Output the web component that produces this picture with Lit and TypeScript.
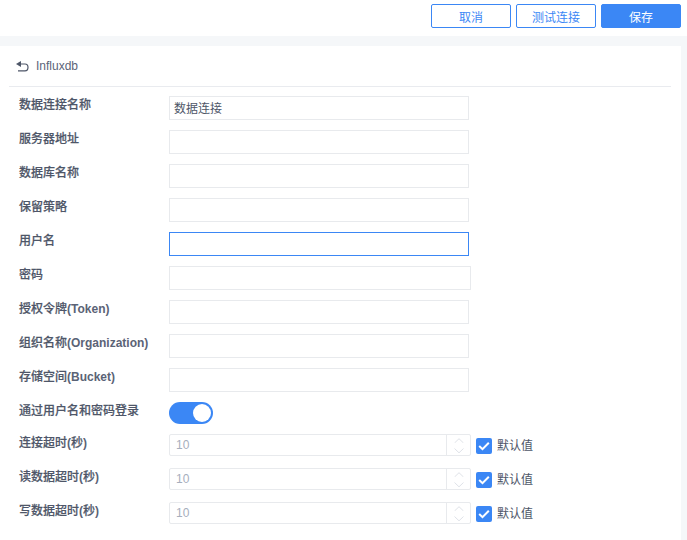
import { LitElement, html, css, svg } from "lit";
import { customElement } from "lit/decorators.js";

const textRows: { label: string; latin?: string; value?: string; focus?: boolean; wide?: boolean }[] = [
  { label: "数据连接名称", value: "数据连接" },
  { label: "服务器地址" },
  { label: "数据库名称" },
  { label: "保留策略" },
  { label: "用户名", focus: true },
  { label: "密码", wide: true },
  { label: "授权令牌", latin: "(Token)" },
  { label: "组织名称", latin: "(Organization)" },
  { label: "存储空间", latin: "(Bucket)" },
];
const numRows = ["连接超时", "读数据超时", "写数据超时"];

@customElement("app-root")
export class AppRoot extends LitElement {
  static styles = css`
    :host {
      display: block;
      width: 687px;
      height: 540px;
      overflow: hidden;
      background: #f5f7f9;
      font-family: "Liberation Sans", "Noto Sans CJK SC", sans-serif;
      font-size: 12px;
      color: #4e5668;
    }
    .top {
      height: 36px;
      box-sizing: border-box;
      background: #fff;
      padding: 4px 6px 0 0;
      display: flex;
      justify-content: flex-end;
      gap: 5px;
    }
    .btn {
      width: 80px;
      height: 24px;
      box-sizing: border-box;
      border: 1px solid #3b87f5;
      border-radius: 2px;
      background: #fff;
      color: #3b87f5;
      font: inherit;
      padding: 0;
      display: flex;
      align-items: center;
      justify-content: center;
    }
    .btn.primary {
      background: #3b87f5;
      color: #fff;
    }
    .card {
      margin: 10px 6px 0 0;
      height: 494px;
      background: #fff;
      padding: 0 10px 0 9px;
      box-sizing: border-box;
    }
    .head {
      height: 41px;
      box-sizing: border-box;
      border-bottom: 1px solid #e9ebef;
      display: flex;
      align-items: center;
      gap: 7px;
      padding: 0 0 0 7px;
      color: #5b6478;
    }
    .head svg {
      display: block;
    }
    .form {
      padding-top: 9px;
      display: flex;
      flex-direction: column;
      gap: 10px;
    }
    .row {
      display: flex;
      height: 24px;
      padding-left: 10px;
    }
    .label {
      width: 150px;
      flex: none;
      padding-top: 1px;
      line-height: 16px;
      font-weight: 500;
      -webkit-text-stroke: 0.2px #4e5668;
    }
    .latin {
      font-weight: 700;
      -webkit-text-stroke: 0;
      color: #5b6376;
    }
    .input {
      width: 300px;
      height: 24px;
      box-sizing: border-box;
      border: 1px solid #e8eaed;
      background: #fff;
      padding: 2px 4px 0;
      line-height: 20px;
      color: #4e5668;
    }
    .input.focus {
      border-color: #3b87f5;
    }
    .input.wide {
      width: 302px;
    }
    .switch {
      width: 44px;
      height: 22px;
      border-radius: 11px;
      background: #3b87f5;
      position: relative;
    }
    .knob {
      position: absolute;
      right: 2px;
      top: 2px;
      width: 18px;
      height: 18px;
      border-radius: 50%;
      background: #fff;
    }
    .num {
      width: 302px;
      height: 22px;
      box-sizing: border-box;
      border: 1px solid #e8eaed;
      border-radius: 2px;
      background: #fff;
      display: flex;
      flex: none;
    }
    .num .val {
      flex: 1;
      padding-left: 6px;
      line-height: 20px;
      color: #a6aebd;
    }
    .spin {
      width: 23px;
      border-left: 1px solid #e8eaed;
      display: flex;
      flex-direction: column;
      align-items: center;
      justify-content: center;
      gap: 5px;
    }
    .spin svg {
      display: block;
    }
    .check {
      margin-left: 5px;
      margin-top: 4px;
      width: 16px;
      height: 16px;
      border-radius: 2px;
      background: #3b87f5;
      flex: none;
    }
    .check svg {
      display: block;
    }
    .def {
      margin-left: 5px;
      margin-top: 4px;
      line-height: 16px;
    }
    .numrow {
      margin-top: -2px;
      margin-bottom: 2px;
    }
  `;

  private chevron(up: boolean) {
    const d = up ? "M0.5 5 L5 0.7 L9.5 5" : "M0.5 0.5 L5 4.8 L9.5 0.5";
    return html`<svg width="10" height="5" viewBox="0 0 10 5">${svg`<path d=${d} fill="none" stroke="#dfe2e8" stroke-width="1"/>`}</svg>`;
  }

  render() {
    return html`
      <div class="top">
        <button class="btn">取消</button>
        <button class="btn">测试连接</button>
        <button class="btn primary">保存</button>
      </div>
      <div class="card">
        <div class="head">
          <svg width="13" height="11" viewBox="0 0 13 11">
            <path d="M0 3 L5 0 V6 Z" fill="#4e5668"/>
            <path d="M4 3 H9 C11 3 12 4.2 12 6.2 C12 8.4 11 9.8 9 9.8 H2" fill="none" stroke="#4e5668" stroke-width="1.2"/>
          </svg>
          <span>Influxdb</span>
        </div>
        <div class="form">
          ${textRows.map(
            (r) => html`<div class="row">
              <div class="label">${r.label}${r.latin ? html`<span class="latin">${r.latin}</span>` : ""}</div>
              <div class="input ${r.focus ? "focus" : ""} ${r.wide ? "wide" : ""}">${r.value ?? ""}</div>
            </div>`
          )}
          <div class="row">
            <div class="label">通过用户名和密码登录</div>
            <div class="switch"><div class="knob"></div></div>
          </div>
          ${numRows.map(
            (l) => html`<div class="row numrow">
              <div class="label">${l}<span class="latin">(</span>秒<span class="latin">)</span></div>
              <div class="num">
                <div class="val">10</div>
                <div class="spin">${this.chevron(true)}${this.chevron(false)}</div>
              </div>
              <div class="check">
                <svg width="16" height="16" viewBox="0 0 16 16">
                  <path d="M3.2 8 L6.5 11.2 L12.8 4.8" fill="none" stroke="#fff" stroke-width="2"/>
                </svg>
              </div>
              <div class="def">默认值</div>
            </div>`
          )}
        </div>
      </div>
    `;
  }
}
